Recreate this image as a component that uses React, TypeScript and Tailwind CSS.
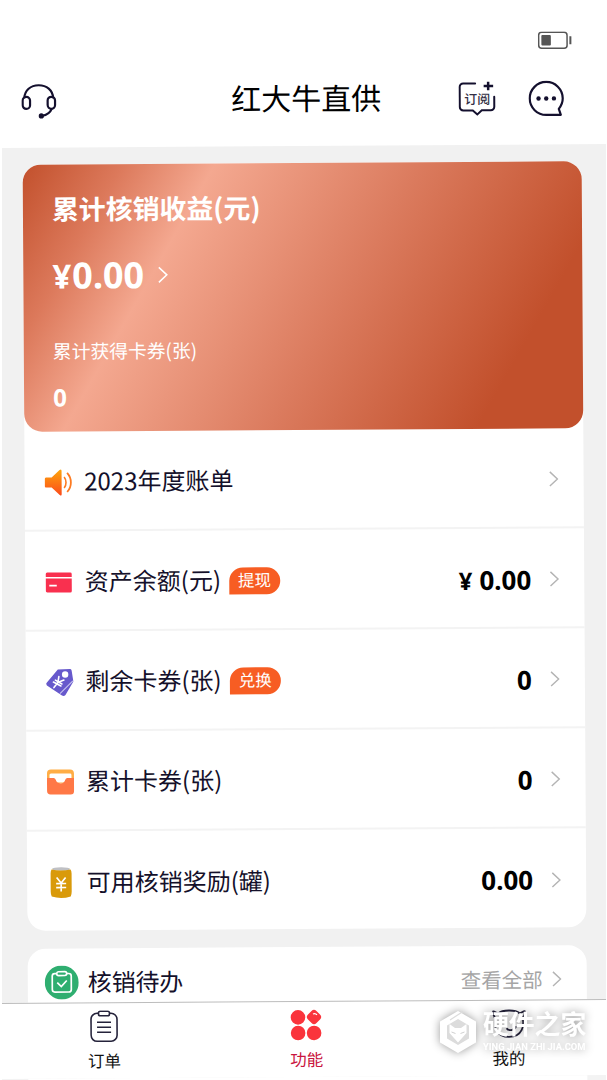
import React from "react";

interface RowProps {
  icon: React.ReactNode;
  label: string;
  tag?: string;
  value?: string;
  currency?: boolean;
  last?: boolean;
}

interface TabProps {
  icon: React.ReactNode;
  label: string;
  active?: boolean;
}

function Chevron({ className }: { className?: string }) {
  return (
    <svg viewBox="0 0 10 18" fill="none" stroke="currentColor" className={className}>
      <path d="M1 1.500 9 9 1 16.500" strokeWidth="1.500" />
    </svg>
  );
}

function HeadsetIcon() {
  return (
    <svg width="36" height="36" viewBox="0 0 36 36" fill="none" stroke="#14102e" strokeWidth="2.200">
      <path d="M3 14.500C3.500 6.500 9.500 1.600 17.500 1.600s14 4.900 14.500 12.900" />
      <rect x="1.400" y="13.200" width="7.400" height="12" rx="3.700" />
      <rect x="26.400" y="13.200" width="7.400" height="12" rx="3.700" />
      <path d="M30.500 25c-1.500 4-5 6.300-10 7.300" />
      <circle cx="20" cy="32.300" r="2.600" fill="#14102e" stroke="none" />
    </svg>
  );
}

function SubscribeIcon() {
  return (
    <div className="relative h-9 w-[38px]">
      <svg width="38" height="36" viewBox="0 0 38 36" fill="none" stroke="#14102e" strokeWidth="2" strokeLinecap="round">
        <path d="M17 2.500H5a3.500 3.500 0 0 0-3.500 3.500v20A3.500 3.500 0 0 0 5 29.500h9.500L19 33.500l4.500-4h9a3.500 3.500 0 0 0 3.500-3.500V16" />
        <path d="M30 1v8.500M25.500 5.200h9.500" strokeWidth="2.500" strokeLinecap="butt" />
      </svg>
      <span className="absolute left-[6px] top-[9px] text-[13px] leading-[18px] font-medium text-[#333044]">订阅</span>
    </div>
  );
}

function ChatIcon() {
  return (
    <svg width="36" height="36" viewBox="0 0 36 36" fill="none" stroke="#14102e" strokeWidth="2.200">
      <path d="M30.500 28.500C33 25.500 34.500 22.500 34.500 18A16.500 16.500 0 1 0 18 34.500h14.500z" strokeLinejoin="round" />
      <g fill="#14102e" stroke="none">
        <circle cx="10.300" cy="18" r="2.200" />
        <circle cx="18" cy="18" r="2.200" />
        <circle cx="25.700" cy="18" r="2.200" />
      </g>
    </svg>
  );
}

function SpeakerIcon() {
  return (
    <svg width="28" height="28" viewBox="0 0 28 28" fill="none">
      <defs>
        <linearGradient id="speaker" x1="0" y1="0" x2="0" y2="1">
          <stop offset="0" stopColor="#fda50b" />
          <stop offset="1" stopColor="#fb4a1c" />
        </linearGradient>
      </defs>
      <path d="M1.500 9H7l8-7.500q2-1.500 2 1v23q0 2.500-2 1L7 19H1.500Q0 19 0 17.500v-7Q0 9 1.500 9z" fill="url(#speaker)" />
      <path d="M19.500 8.500c2.500 3 2.500 8 0 11" stroke="#fd7b22" strokeWidth="1.600" />
      <path d="M22.500 4.500c5 5.500 5 13.500 0 19" stroke="#fd7b22" strokeWidth="1.800" />
    </svg>
  );
}

function BankCardIcon() {
  return (
    <svg width="28" height="28" viewBox="0 0 28 28">
      <path d="M2 4h23a1.500 1.500 0 0 1 1.500 1.500V8.500H.5v-3A1.500 1.500 0 0 1 2 4z" fill="#f9304f" />
      <path d="M.5 10h26v12.500a1.500 1.500 0 0 1-1.500 1.500H2a1.500 1.500 0 0 1-1.500-1.500z" fill="#f9304f" />
      <path d="M4 17h7.500" stroke="#fff" strokeWidth="1.700" />
    </svg>
  );
}

function CouponIcon() {
  return (
    <svg width="28" height="28" viewBox="0 0 28 28">
      <path d="M12 1 24 .500q1.500 0 1.800 1.500L27.500 13l-8 13.500q-1.500 1.500-3.500.5L1 17q-1.500-2 0-3z" fill="#6759cc" />
      <path d="M27 12.500 14 25" stroke="#c9c4f0" strokeWidth="1.100" />
      <circle cx="19.300" cy="6" r="3.200" fill="#fff" />
      <g stroke="#fff" strokeWidth="1.600" fill="none" strokeLinecap="round">
        <path d="M12 14 18 11.500M12 14l1-6M12 14l-4 5M7.500 13.500l7.500 4M9.500 11.500l6.500 4" />
      </g>
    </svg>
  );
}

function WalletIcon() {
  return (
    <svg width="28" height="28" viewBox="0 0 28 28">
      <rect x=".5" y="1" width="27" height="14" rx="4" fill="#ffad45" />
      <rect x="3" y="5" width="22" height="9" rx="1.500" fill="#fff" />
      <path d="M.5 9.500h6.500c1.200 0 1.700.7 2.200 1.800a5 5 0 0 0 9.600 0c.5-1.100 1-1.800 2.200-1.800h6.500V22.500a3.500 3.500 0 0 1-3.500 3.500H4A3.500 3.500 0 0 1 .5 22.500z" fill="#ff7846" />
    </svg>
  );
}

function CanIcon() {
  return (
    <svg width="28" height="32" viewBox="0 0 28 32">
      <ellipse cx="14" cy="2.500" rx="9" ry="1.800" fill="#bfc0c4" />
      <path d="M4.500 3Q14 5 23.500 3q1 1.500 1 4v18q0 3-1 5Q14 33 4.500 30q-1-2-1-5V7q0-2.500 1-4z" fill="#d99a0a" />
      <path d="M9.500 11 14 16.500 18.500 11M14 16.500V25M9 17h10M9 21h10" stroke="#fff" strokeWidth="1.700" fill="none" />
    </svg>
  );
}

function TodoIcon() {
  return (
    <svg width="34" height="34" viewBox="0 0 34 34" fill="none" stroke="#fff" strokeWidth="1.700">
      <circle cx="17" cy="17" r="17" fill="#2fae70" stroke="none" />
      <path d="M12 8H10a2.500 2.500 0 0 0-2.500 2.500V24a2.500 2.500 0 0 0 2.500 2.500h14a2.500 2.500 0 0 0 2.500-2.500V10.500A2.500 2.500 0 0 0 24 8h-2" />
      <rect x="12" y="6.200" width="10" height="3.800" rx="1.900" />
      <path d="m12.500 17 4 4 5.500-6" />
    </svg>
  );
}

function OrderIcon() {
  return (
    <svg width="28" height="32" viewBox="0 0 28 32" fill="none" stroke="#25233b" strokeWidth="1.600">
      <path d="M8.500 3H7A6 6 0 0 0 1 9v16a6 6 0 0 0 6 6h14a6 6 0 0 0 6-6V9a6 6 0 0 0-6-6h-1.500" />
      <rect x="8.500" y="1" width="11" height="4.500" rx="1.800" />
      <path d="M7 12h14M7 17h14M7 22h14" />
    </svg>
  );
}

function FeatureIcon() {
  return (
    <svg width="32" height="32" viewBox="0 0 32 32" fill="#fa343c">
      <circle cx="8" cy="8.300" r="7.300" />
      <circle cx="8" cy="24" r="7.300" />
      <circle cx="24" cy="24" r="7.300" />
      <rect x="18" y="2.100" width="12" height="12" rx="3.500" transform="rotate(45 24 8.100)" />
      <path d="M23 5q2.500-1 4 1" stroke="#fff" strokeWidth="1.200" fill="none" />
    </svg>
  );
}

function BullIcon() {
  return (
    <svg width="34" height="30" viewBox="0 0 34 30" fill="none" stroke="#25233b" strokeWidth="1.800" strokeLinejoin="round">
      <path d="M3.300 9.500C1.500 7 .9 5 1.200 2.500 3 2.200 4 4.600 6.500 4.600 8.500 2.600 12 1.800 17 1.800s8.500.8 10.500 2.800c2.500 0 3.500-2.400 5.300-2.100.3 2.500-.3 4.500-2.100 7" />
      <path d="M3.300 9.500c-.8 4-.6 8.500 1.200 12C6.800 26 11.500 28.200 17 28.200s10.200-2.200 12.500-6.700c1.800-3.500 2-8 1.200-12" />
      <path d="M14.500 19.500c1.500 3 8 2.500 9.500-2" />
    </svg>
  );
}

function Row({ icon, label, tag, value, currency, last }: RowProps) {
  return (
    <div className={`flex items-center pl-5 pr-[25px] pt-[3px] ${last ? "h-[99px]" : "h-[100px] border-b-2 border-[#f3f3f3]"}`}>
      <div className="flex w-7 justify-center">{icon}</div>
      <span className="-mt-[3px] ml-[11.500px] font-['Noto_Sans_CJK_SC',sans-serif] text-2xl text-[#14102a]">{label}</span>
      {tag && (
        <span className="ml-[8px] flex h-[27px] w-[51px] items-center justify-center rounded-[14px] rounded-bl-none bg-[#f75d23] text-[16.500px] text-white">
          {tag}
        </span>
      )}
      <div className="ml-auto mt-px flex items-baseline gap-[7px] font-bold text-black">
        {currency && <span className="text-2xl">¥</span>}
        <span className="text-[26px]">{value}</span>
      </div>
      <Chevron className="ml-[18px] h-[17px] w-[10px] text-[#b4b4b4]" />
    </div>
  );
}

function Tab({ icon, label, active }: TabProps) {
  return (
    <div className="flex flex-1 flex-col items-center">
      <div className="flex h-8 items-center">{icon}</div>
      <span className={`mt-[7px] text-[16.500px] leading-6 ${active ? "text-[#c9163f]" : "text-[#111]"}`}>{label}</span>
    </div>
  );
}

function Watermark() {
  return (
    <div className="absolute left-[437px] top-[1010px] flex items-center gap-[6px] text-white drop-shadow-[0_0_5px_rgba(0,0,0,0.4)]">
      <svg width="38" height="44" viewBox="0 0 38 44">
        <path d="M19 8 31 15v14L19 36 7 29V15z" fill="#dcdcdc" />
        <path fillRule="evenodd" fill="#fff" d="M19 1 37 11.500v21L19 43 1 32.500v-21zM19 9 8 15.500v13L19 35l11-6.500v-13z" />
        <path d="M24 1.500 11 10" stroke="#dcdcdc" strokeWidth="1.200" />
        <path d="m10.500 14 5.500 4h6l5.500-4v9L19 32.500 10.500 23z" fill="#fff" />
        <path d="m12.500 22 4 1.500M25.500 22l-4 1.500" stroke="#d0d0d0" strokeWidth="1" />
      </svg>
      <div className="flex flex-col">
        <span className="text-[25.800px] leading-[27px] font-bold">硬件之家</span>
        <span className="whitespace-nowrap pt-[2px] font-['Roboto'] text-[9.400px] leading-[13px] font-bold">YING JIAN ZHI JIA.COM</span>
      </div>
    </div>
  );
}

export default function App() {
  return (
    <div className="relative h-[1080px] w-[607px] overflow-hidden border-r border-l-2 border-white bg-white font-['Noto_Sans','Noto_Sans_CJK_SC',sans-serif]">
      <div className="-ml-[2px] flex h-[1080px] w-[607px] -rotate-[0.36deg] flex-col">
        <header className="flex h-[146px] shrink-0 flex-col">
          <div className="flex h-[66px] items-start justify-end pr-[31px] pt-[33px]">
            <svg width="35" height="18" viewBox="0 0 35 18" fill="none">
              <rect x=".8" y=".8" width="28.400" height="16" rx="3" stroke="#555" strokeWidth="1.500" />
              <rect x="3.500" y="3.500" width="9.500" height="10.600" rx="1" fill="#555" />
              <path d="M32.500 5v8" stroke="#555" strokeWidth="2" />
            </svg>
          </div>
          <div className="grid h-[68px] grid-cols-[1fr_auto_1fr] items-center pl-[24px] pr-[40px]">
            <HeadsetIcon />
            <h1 className="-mt-[3px] pl-[27px] text-[30px] leading-[40px] text-black">红大牛直供</h1>
            <div className="flex items-center justify-end gap-8">
              <SubscribeIcon />
              <ChatIcon />
            </div>
          </div>
        </header>

        <main className="-mx-2 h-[855px] shrink-0 overflow-hidden bg-[#f1f1f1] pl-[33px] pt-[17px]">
          <section className="w-[559px] rounded-[18px] bg-white">
            <div className="flex h-[267px] flex-col rounded-[18px] bg-[linear-gradient(120deg,#c2502c_0%,#dc795b_14%,#f4a890_27%,#db7b5e_56%,#c2502c_85%)] pl-[29px] text-white">
              <h2 className="mt-6 font-['Noto_Sans_CJK_SC',sans-serif] text-[26.900px] leading-[40px] font-bold">累计核销收益(元)</h2>
              <div className="mt-[23px] flex items-center">
                <span className="text-4xl leading-[48px] font-bold">
                  <span className="mr-px text-[33px]">¥</span>0.00
                </span>
                <Chevron className="-mt-px ml-[13px] h-[18px] w-[11px]" />
              </div>
              <p className="mt-[36px] font-['Noto_Sans_CJK_SC',sans-serif] text-[18.800px] leading-7">累计获得卡券(张)</p>
              <p className="mt-[15px] text-2xl leading-9 font-bold">0</p>
            </div>
            <Row icon={<SpeakerIcon />} label="2023年度账单" />
            <Row icon={<BankCardIcon />} label="资产余额(元)" tag="提现" value="0.00" currency />
            <Row icon={<CouponIcon />} label="剩余卡券(张)" tag="兑换" value="0" />
            <Row icon={<WalletIcon />} label="累计卡券(张)" value="0" />
            <Row icon={<CanIcon />} label="可用核销奖励(罐)" value="0.00" last />
          </section>

          <section className="mt-[18px] h-[120px] w-[559px] rounded-t-[18px] bg-white">
            <div className="flex h-[54px] items-center pl-[17px] pr-[25px] pt-[14px]">
              <TodoIcon />
              <span className="ml-[9px] text-2xl tracking-[-0.200px] text-[#14102a]">核销待办</span>
              <span className="ml-auto mt-px text-[20.500px] text-[#a5a5a5]">查看全部</span>
              <Chevron className="-mt-px ml-[9px] h-[17px] w-[10px] text-[#b4b4b4]" />
            </div>
            <div className="flex justify-between pl-[158px] pr-[53px]">
              <span className="h-3 w-3 rounded-t-sm bg-[#58a583]" />
              <span className="h-3 w-3 rounded-t-sm bg-[#e5764a]" />
            </div>
          </section>
        </main>

        <nav className="-mx-2 flex h-[76px] shrink-0 border-t border-[#bdbdbd] bg-white px-2 pt-[7px]">
          <Tab icon={<OrderIcon />} label="订单" />
          <Tab icon={<FeatureIcon />} label="功能" active />
          <Tab icon={<BullIcon />} label="我的" />
        </nav>
        <div className="-mx-2 h-3 shrink-0 bg-[#f3f3f3] pl-[33px]">
          <div className="h-3 w-[559px] bg-white" />
        </div>
      </div>
      <Watermark />
    </div>
  );
}
